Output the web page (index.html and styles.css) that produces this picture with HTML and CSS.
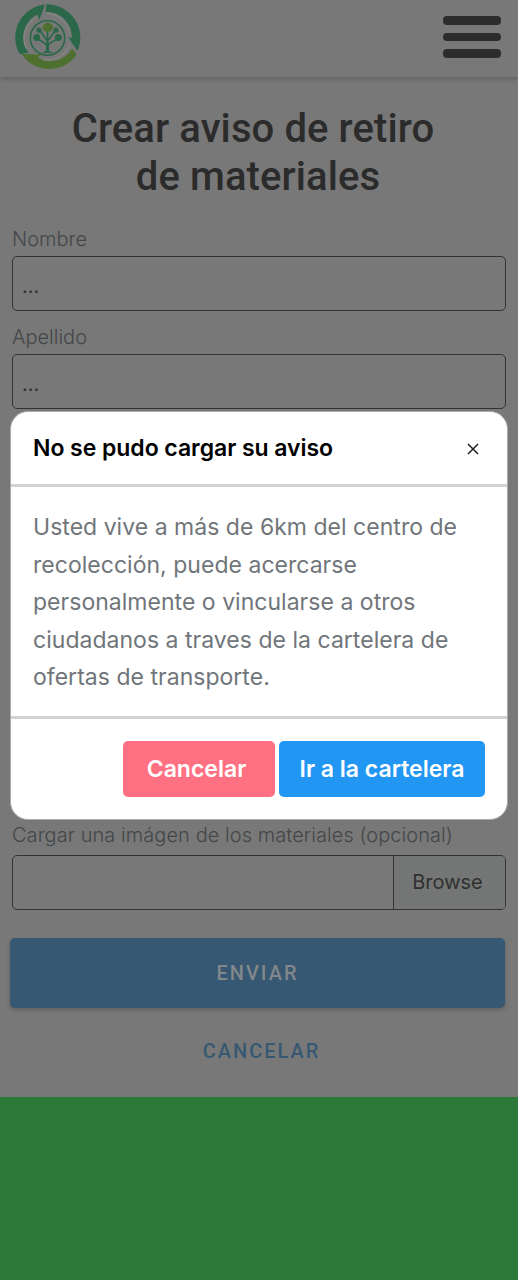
FILE: index.html
```html
<!DOCTYPE html>
<html lang="es">
<head>
<meta charset="utf-8">
<title>Crear aviso de retiro de materiales</title>
<link rel="stylesheet" href="styles.css">
</head>
<body>
<div class="page">
  <header class="navbar">
    <svg class="logo" viewBox="0 0 68 68" aria-label="Logo">
      <g fill="#2a6849">
        <path d="M31 .500A33.300 33.300 0 0 0 5.500 50L14.500 48.800A25.500 25.500 0 0 1 23.300 10.500L25.300 16Z"/>
        <path d="M32.500 .300A33.300 33.300 0 0 1 63.500 47L54 33L57.800 34.300A25 25 0 0 0 31.500 8Z"/>
      </g>
      <path fill="#4e702f" d="M7.500 50L28 50.500L23.500 53.500A25 25 0 0 0 58 44.500L62.800 50.500A33.300 33.300 0 0 1 7.500 50Z"/>
      <path fill="none" stroke="#858585" stroke-width="1.300" d="M12 44A25 25 0 0 1 22 13M33 9A25 25 0 0 1 56 31M56 40A25 25 0 0 1 30 56"/>
      <circle cx="33.500" cy="34" r="17.200" fill="none" stroke="#2a6849" stroke-width="1.600"/>
      <path fill="none" stroke="#2a6849" stroke-width="1.700" d="M33.500 27V48M33.500 42.500Q31 38 23 35M33.500 42.500Q36 38 44 35M33.500 37L26 27M33.500 37L41 27"/>
      <path fill="#2a6849" d="M32 38H35V46.500L39 49H28L32 46.500Z"/>
      <g fill="#2a6849"><circle cx="22.700" cy="33.500" r="3.500"/><circle cx="44.300" cy="33.500" r="3.500"/><circle cx="25" cy="26.200" r="2.600"/><circle cx="42" cy="26.200" r="2.600"/></g>
      <path fill="#4e702f" d="M29.500 26Q27 22 30.500 20Q33.500 17.500 37 20Q40.500 22 38 26Q35 28.500 33.500 27.500Q31 28.500 29.500 26Z"/>
    </svg>
    <div class="menu"><i></i><i></i><i></i></div>
  </header>
  <main class="form">
    <h1 class="title"><span>Crear aviso de retiro</span><span class="title-end">de materiales</span></h1>
    <div class="field"><label class="label">Nombre</label><div class="input">...</div></div>
    <div class="field"><label class="label">Apellido</label><div class="input">...</div></div>
    <div class="field field-file"><label class="label label-file">Cargar una imágen de los materiales (opcional)</label><div class="input file"><span class="browse">Browse</span></div></div>
    <div class="submit">ENVIAR</div>
    <div class="cancel">CANCELAR</div>
  </main>
  <section class="modal">
    <div class="modal-head"><h2 class="modal-title">No se pudo cargar su aviso</h2>
      <svg class="close" viewBox="0 0 12 12"><path d="M1 1L11 11M11 1L1 11"/></svg></div>
    <p class="modal-body">Usted vive a más de 6km del centro de<br>recolección, puede acercarse<br>personalmente o vincularse a otros<br>ciudadanos a traves de la cartelera de<br>ofertas de transporte.</p>
    <div class="modal-foot"><span class="btn btn-cancel">Cancelar</span><span class="btn btn-go">Ir a la cartelera</span></div>
  </section>
</div>
</body>
</html>
```
FILE: styles.css
```css
* { box-sizing: border-box; }
body { margin: 0; background: #2c7838; font-family: Inter, "Liberation Sans", sans-serif; }
.page { position: relative; height: 1097px; background: #787878; overflow: hidden; }
.navbar { height: 77px; padding: 4px 17px 0 14px; display: flex; justify-content: space-between; align-items: flex-start; box-shadow: 0 2px 5px rgba(0,0,0,.2); }
.logo { width: 68px; height: 68px; }
.menu { display: flex; flex-direction: column; gap: 8px; padding-top: 12px; }
.menu i { display: block; width: 58px; height: 8.500px; border-radius: 4px; background: #2c2c2c; }
.form { padding: 28px 12px 0; }
.title { margin: 0 0 22px; height: 96px; padding-right: 12px; font: 500 40px/48px Roboto, sans-serif; letter-spacing: .1px; text-align: center; color: #2b2b2b; }
.title span { display: block; }
.title .title-end { padding-left: 10px; }
.field { height: 98px; padding-top: 2px; }
.label { display: block; height: 31px; font-size: 20px; line-height: 28px; font-weight: 300; color: #444748; white-space: nowrap; }
.label-file { height: 34px; letter-spacing: .060px; }
.input { height: 55px; border: 1.500px solid #333; border-radius: 5px; padding: 15px 9px 0; font-size: 20px; line-height: 28px; color: #303030; }
.field-file { height: 101px; margin-top: 400px; }
.file { display: flex; justify-content: flex-end; padding: 0; }
.browse { width: 112px; border-left: 1px solid #333; background: #747675; border-radius: 0 4px 4px 0; line-height: 53px; text-align: center; padding-right: 4px; }
.submit { height: 70px; margin: 18px 1px 0 -2px; border-radius: 5px; background: #365872; box-shadow: 0 2px 4px rgba(0,0,0,.2); color: #81878b; font: 500 20px/71px Roboto, sans-serif; letter-spacing: 2px; text-align: center; }
.cancel { margin-top: 31px; font: 500 20px/24px Roboto, sans-serif; letter-spacing: 2px; text-align: center; color: #365872; padding-left: 5px; }
.modal { position: absolute; left: 10px; top: 411px; width: 498px; height: 409px; background: #fff; border: 1px solid #aaa; border-radius: 18px; }
.modal-head { height: 75px; padding: 0 28px 0 22px; border-bottom: 3px solid #d0d3d4; display: flex; align-items: center; justify-content: space-between; }
.modal-title { margin: 0; font-size: 23px; font-weight: 600; line-height: 32px; letter-spacing: -.050px; color: #000; white-space: nowrap; }
.close { width: 12px; height: 12px; margin-top: 2px; fill: none; stroke: #222; stroke-width: 1.500; }
.modal-body { margin: 0; height: 232px; padding: 22px 22px 0; border-bottom: 3px solid #d0d1d4; font-size: 23px; line-height: 37.500px; letter-spacing: .025px; color: #70757a; white-space: nowrap; }
.modal-foot { display: flex; justify-content: flex-end; gap: 4px; padding: 22px 22px 0; }
.btn { height: 56px; border-radius: 5px; color: #fff; font-weight: 600; font-size: 23px; line-height: 56px; text-align: center; white-space: nowrap; }
.btn-cancel { width: 152px; background: #ff7082; padding-right: 5px; }
.btn-go { width: 206px; background: #2296f3; }
```
